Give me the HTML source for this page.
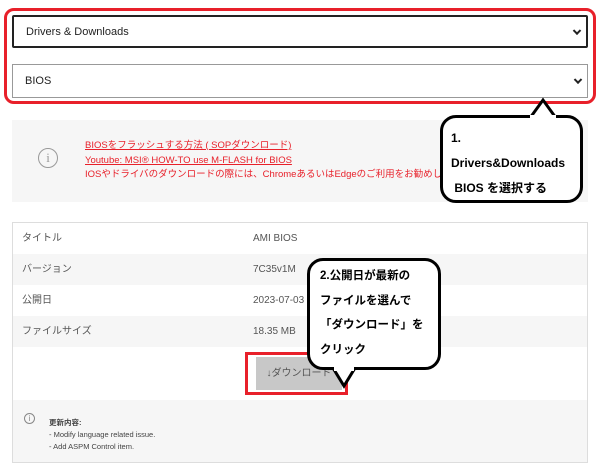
<!DOCTYPE html><html><head><meta charset="utf-8"><style>
*{margin:0;padding:0;box-sizing:border-box}
body{width:600px;height:471px;background:#fff;position:relative;overflow:hidden;font-family:"Liberation Sans","Noto Sans CJK JP",sans-serif;color:#333}
.a{position:absolute}
.sel{position:absolute;left:12px;width:576px;background:#fff;font-size:11px;color:#222;padding-left:12px;display:flex;align-items:center}
.chev{position:absolute;right:6px;top:50%;width:6px;height:6px;border-right:2px solid #222;border-bottom:2px solid #222;transform:translateY(-70%) rotate(45deg)}
.row{position:absolute;left:13px;width:574px;height:31px;font-size:10px;color:#555}
.row span{position:absolute;top:0;line-height:31px}
.bub{position:absolute;background:#fff;border:3px solid #000;border-radius:16px;font-weight:bold;color:#000;font-size:12px;white-space:nowrap}
</style></head><body>
<div class="a" style="left:4px;top:8px;width:592px;height:96px;border:3px solid #e8202a;border-radius:10px"></div>
<div class="sel" style="top:15px;height:33px;border:2px solid #222;border-radius:2px">Drivers &amp; Downloads<div class="chev"></div></div>
<div class="sel" style="top:64px;height:34px;border:1px solid #999">BIOS<div class="chev"></div></div>

<div class="a" style="left:12px;top:120px;width:576px;height:82px;background:#f6f6f6"></div>
<div class="a" style="left:38px;top:148px;width:20px;height:20px;border:1.5px solid #999;border-radius:50%;color:#999;font-size:13px;text-align:center;line-height:17px;font-family:'Liberation Serif',serif">i</div>
<div class="a" style="left:85px;top:139px;font-size:9.5px;line-height:14.5px;color:#e8202a">
<div style="text-decoration:underline">BIOSをフラッシュする方法 ( SOPダウンロード)</div>
<div style="text-decoration:underline">Youtube: MSI® HOW-TO use M-FLASH for BIOS</div>
<div>IOSやドライバのダウンロードの際には、ChromeあるいはEdgeのご利用をお勧めします。</div></div>

<svg class="a" style="left:528px;top:97px" width="30" height="22"><path d="M2 21 L15 3 L28 21" fill="#fff" stroke="#000" stroke-width="3"/></svg>
<div class="bub" style="left:440px;top:115px;width:143px;height:88px;padding:8px 0 0 8px;line-height:25px">1.<br>Drivers&amp;Downloads<br>&nbsp;BIOS を選択する</div>
<div class="a" style="left:530px;top:115px;width:26px;height:4px;background:#fff"></div>

<div class="a" style="left:12px;top:222px;width:576px;height:241px;border:1px solid #ddd"></div>
<div class="row" style="top:223px;background:#fff"><span style="left:9px">タイトル</span><span style="left:240px">AMI BIOS</span></div>
<div class="row" style="top:254px;background:#f6f6f6"><span style="left:9px">バージョン</span><span style="left:240px">7C35v1M</span></div>
<div class="row" style="top:285px;background:#fff"><span style="left:9px">公開日</span><span style="left:240px">2023-07-03</span></div>
<div class="row" style="top:316px;background:#f6f6f6"><span style="left:9px">ファイルサイズ</span><span style="left:240px">18.35 MB</span></div>

<div class="a" style="left:245px;top:352px;width:103px;height:43px;border:3px solid #e8202a"></div>
<div class="a" style="left:256px;top:357px;width:86px;height:33px;background:#c8c8c8;font-size:10px;color:#555;text-align:center;line-height:33px">↓ダウンロード</div>

<div class="a" style="left:13px;top:400px;width:574px;height:62px;background:#f6f6f6"></div>
<div class="a" style="left:24px;top:413px;width:11px;height:11px;border:1px solid #888;border-radius:50%;font-size:8px;line-height:9px;text-align:center;color:#888">i</div>
<div class="a" style="left:49px;top:417px;font-size:7.5px;line-height:12px;color:#444"><b>更新内容:</b><br>- Modify language related issue.<br>- Add ASPM Control item.</div>

<svg class="a" style="left:331px;top:368px" width="26" height="22"><path d="M2 0 L13 18 L24 0" fill="#fff" stroke="#000" stroke-width="3"/></svg>
<div class="bub" style="left:307px;top:258px;width:134px;height:112px;padding:3px 0 0 10px;line-height:24.5px;font-size:11.5px">2.公開日が最新の<br>ファイルを選んで<br>「ダウンロード」を<br>クリック</div>
<div class="a" style="left:334px;top:366px;width:20px;height:5px;background:#fff"></div>
</body></html>
